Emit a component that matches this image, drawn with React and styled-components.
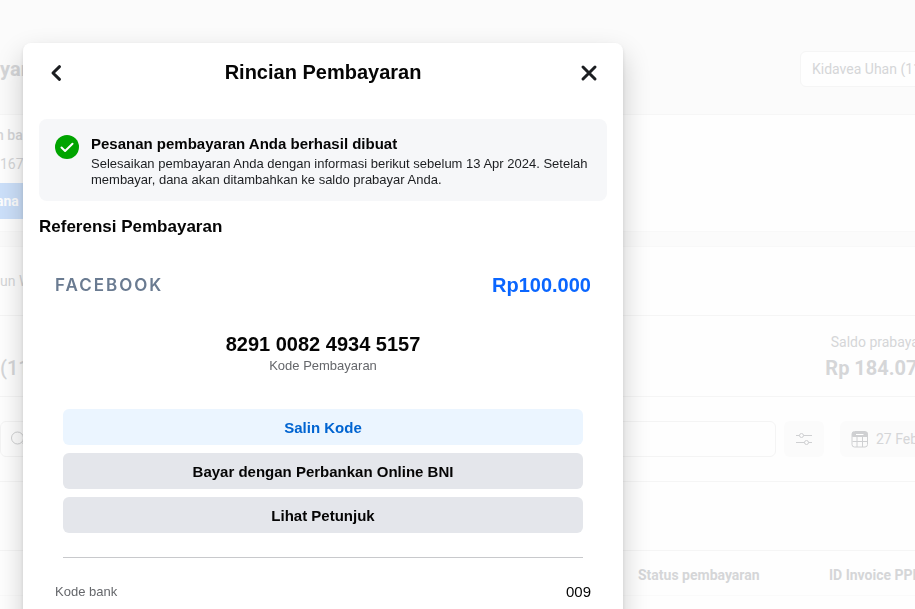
import React from 'react';
import styled, { createGlobalStyle } from 'styled-components';

const GlobalStyle = createGlobalStyle`
  * {
    box-sizing: border-box;
  }
  body {
    margin: 0;
    overflow: hidden;
    background: #fefefe;
    font-family: Roboto, sans-serif;
  }
  h1, h2, h3, p, dl, dd {
    margin: 0;
  }
  button, input, select {
    font-family: inherit;
  }
`;

/* Billing page behind the dialog, faded out */

const Page = styled.main`
  width: calc(100% + 24px);
  color: #d5d6d8;
  font-size: 14px;
  line-height: 20px;
  white-space: nowrap;
`;

const TopBar = styled.header`
  display: flex;
  align-items: center;
  justify-content: space-between;
  height: 115px;
  padding-top: 24px;
  background: #fbfbfb;
  border-bottom: 1px solid #f6f6f6;
`;

const PageTitle = styled.h1`
  font-size: 20px;
  font-weight: 700;
`;

const AccountSelect = styled.select`
  appearance: none;
  width: 139px;
  height: 36px;
  padding: 0 11px;
  border: 1px solid #f5f5f5;
  border-radius: 6px;
  background: #fefefe;
  color: #d5d6d8;
  font-size: 14px;
`;

const FundsSection = styled.section`
  display: flex;
  flex-direction: column;
  align-items: flex-start;
  justify-content: flex-end;
  gap: 9px;
  height: 116px;
  padding-bottom: 12px;
`;

const Strong = styled.p`
  margin-left: -4px;
  font-weight: 500;
`;

const AddFunds = styled.button`
  height: 36px;
  margin-left: -4px;
  padding: 0 16px 0 0;
  border: 0;
  border-radius: 0 6px 6px 0;
  background: #cce0fa;
  color: #fefefe;
  font-size: 14px;
  font-weight: 700;
`;

const Divider = styled.div`
  height: 16px;
  background: #fbfbfb;
  border-top: 1px solid #f8f8f8;
  border-bottom: 1px solid #f8f8f8;
`;

const Row = styled.section`
  display: flex;
  align-items: center;
  justify-content: space-between;
  height: ${(props) => props.$height};
  border-bottom: 1px solid #f5f5f5;
`;

const Balance = styled.div`
  display: flex;
  flex-direction: column;
  align-items: center;
  gap: 4px;
  padding-right: 10px;
`;

const Amount = styled.p`
  font-size: 20px;
  line-height: 24px;
  font-weight: 700;
`;

const RowTitle = styled.h2`
  padding-top: 24px;
  font-size: 20px;
  line-height: 24px;
  font-weight: 500;
`;

const Filters = styled.form`
  display: flex;
  align-items: center;
  height: 85px;
  border-bottom: 1px solid #f5f5f5;
`;

const SearchBox = styled.label`
  display: flex;
  flex: 1;
  align-items: center;
  gap: 8px;
  height: 36px;
  padding: 0 10px;
  border: 1px solid #f4f4f4;
  border-radius: 6px;
`;

const SearchInput = styled.input`
  flex: 1;
  border: 0;
  outline: 0;
  background: transparent;
  font-size: 14px;
`;

const FilterButton = styled.button`
  display: flex;
  align-items: center;
  justify-content: ${(props) => (props.$wide ? 'flex-start' : 'center')};
  gap: 8px;
  width: ${(props) => (props.$wide ? '99px' : '40px')};
  height: 36px;
  margin-left: ${(props) => (props.$wide ? '16px' : '8px')};
  padding: ${(props) => (props.$wide ? '0 11px' : '0')};
  border: 0;
  border-radius: 6px;
  background: #fbfbfb;
  color: #d5d6d8;
  font-size: 14px;
  white-space: nowrap;
`;

const Table = styled.table`
  width: 100%;
  border-collapse: collapse;
  table-layout: fixed;
`;

const Th = styled.th`
  width: ${(props) => props.$width || 'auto'};
  height: 44px;
  padding: 4px 8px 0;
  border-bottom: 1px solid #fafafa;
  font-weight: 700;
  text-align: left;
`;

/* Dialog */

const Overlay = styled.div`
  position: fixed;
  inset: 0;
  overflow: hidden;
  padding: 43px 23px 0;
  font-family: "Liberation Sans", Arial, sans-serif;
  color: #050505;
`;

const Dialog = styled.div`
  max-width: 600px;
  min-height: calc(100% + 48px);
  padding: 12px 16px 0;
  border-radius: 8px;
  background: #fff;
  box-shadow: 0 12px 28px rgba(0, 0, 0, 0.2), 0 2px 4px rgba(0, 0, 0, 0.1);
`;

const DialogHeader = styled.header`
  display: flex;
  align-items: center;
  justify-content: space-between;
  height: 36px;
`;

const DialogTitle = styled.h2`
  padding-bottom: 2px;
  font-size: 20px;
  line-height: 24px;
  font-weight: 700;
`;

const IconButton = styled.button`
  display: flex;
  align-items: center;
  justify-content: center;
  width: 36px;
  height: 36px;
  padding: 0;
  border: 0;
  background: transparent;
  color: #1c1e21;
`;

const Notice = styled.section`
  display: flex;
  gap: 12px;
  margin-top: 28px;
  padding: 16px 16px 13px;
  border-radius: 8px;
  background: #f6f7f9;
`;

const NoticeTitle = styled.h3`
  margin-bottom: 3px;
  font-size: 15px;
  line-height: 18px;
  font-weight: 700;
`;

const NoticeText = styled.p`
  color: #1c1e21;
  font-size: 13px;
  line-height: 16px;
`;

const SectionTitle = styled.h3`
  margin-top: 16px;
  font-size: 17px;
  line-height: 20px;
  font-weight: 700;
`;

const Payee = styled.div`
  display: flex;
  align-items: center;
  justify-content: space-between;
  margin-top: 36px;
  padding: 0 16px;
`;

const Wordmark = styled.span`
  color: #6a7b91;
  font-family: Inter, sans-serif;
  font-size: 17px;
  line-height: 24px;
  font-weight: 600;
  letter-spacing: 2px;
`;

const Price = styled.strong`
  color: #0a66ff;
  font-size: 20px;
  line-height: 24px;
`;

const Code = styled.div`
  margin-top: 35px;
  text-align: center;
`;

const CodeNumber = styled.p`
  font-size: 20px;
  line-height: 24px;
  font-weight: 700;
`;

const Caption = styled.p`
  color: #65676b;
  font-size: 13px;
  line-height: 20px;
`;

const Actions = styled.div`
  display: flex;
  flex-direction: column;
  gap: 8px;
  margin: 33px 24px 0;
  padding-bottom: 24px;
  border-bottom: 1px solid #c8c9cc;
`;

const Action = styled.button`
  height: 36px;
  border: 0;
  border-radius: 6px;
  background: ${(props) => (props.$primary ? '#ebf5ff' : '#e4e6eb')};
  color: ${(props) => (props.$primary ? '#0064d1' : '#050505')};
  font-size: 15px;
  font-weight: 700;
`;

const Details = styled.dl`
  display: flex;
  align-items: center;
  justify-content: space-between;
  margin-top: 24px;
  padding: 0 16px;
  line-height: 20px;
`;

const Term = styled.dt`
  color: #65676b;
  font-size: 13px;
`;

const Value = styled.dd`
  font-size: 15px;
`;

const CheckSvg = styled.svg`
  flex: none;
`;

const BackIcon = () => (
  <svg width="20" height="20" viewBox="0 0 20 20" fill="none" stroke="currentColor" strokeWidth="3" strokeLinecap="round" strokeLinejoin="round">
    <path d="M12.5 3.7 6 10l6.500 6.300" />
  </svg>
);

const CloseIcon = () => (
  <svg width="20" height="20" viewBox="0 0 20 20" fill="none" stroke="currentColor" strokeWidth="3" strokeLinecap="round">
    <path d="m4 4 12 12M16 4 4 16" />
  </svg>
);

const CheckIcon = () => (
  <CheckSvg width="24" height="24" viewBox="0 0 24 24">
    <circle cx="12" cy="12" r="12" fill="#00a400" />
    <path d="m6.500 12.500 3.600 3.500 7.400-7.200" fill="none" stroke="#fff" strokeWidth="2" strokeLinecap="round" strokeLinejoin="round" />
  </CheckSvg>
);

const SearchIcon = () => (
  <svg width="16" height="16" viewBox="0 0 16 16" fill="none" stroke="#d0d1d2">
    <circle cx="6.500" cy="7" r="6" />
    <path d="m11 11.500 3.500 3.500" />
  </svg>
);

const SlidersIcon = () => (
  <svg width="16" height="16" viewBox="0 0 16 16" fill="none" stroke="#cfd0d2">
    <path d="M0 4.500h3.500M7.500 4.500H16M0 11.500h8.500M12.500 11.500H16" />
    <circle cx="5.500" cy="4.500" r="2" />
    <circle cx="10.500" cy="11.500" r="2" />
  </svg>
);

const CalendarIcon = () => (
  <svg width="17" height="17" viewBox="0 0 17 17" fill="none" stroke="#cfd0d2">
    <rect x="1" y="0.500" width="15.500" height="15.500" rx="2.500" />
    <path d="M1.500 1.500h14.500v4H1.500z" fill="#cfd0d2" />
    <path d="M6 6v10M11.500 6v10M1.500 10.500h14.500" />
    <path d="M5 3.500h7.500" stroke="#fff" />
  </svg>
);

const Billing = () => (
  <Page>
    <TopBar>
      <PageTitle>yaran</PageTitle>
      <AccountSelect aria-label="Kidavea Uhan">
        <option>Kidavea Uhan (11</option>
      </AccountSelect>
    </TopBar>
    <FundsSection>
      <Strong>n ba</Strong>
      <p>167</p>
      <AddFunds type="button">ana</AddFunds>
    </FundsSection>
    <Divider />
    <Row $height="69px">
      <p>un W</p>
    </Row>
    <Row $height="81px">
      <RowTitle>(11</RowTitle>
      <Balance>
        <p>Saldo prabayar</p>
        <Amount>Rp 184.073</Amount>
      </Balance>
    </Row>
    <Filters>
      <SearchBox>
        <SearchIcon />
        <SearchInput type="text" />
      </SearchBox>
      <FilterButton type="button" aria-label="Filter">
        <SlidersIcon />
      </FilterButton>
      <FilterButton type="button" $wide>
        <CalendarIcon />
        27 Feb
      </FilterButton>
    </Filters>
    <Row $height="69px" />
    <Table>
      <thead>
        <tr>
          <Th />
          <Th $width="191px">Status pembayaran</Th>
          <Th $width="118px">ID Invoice PPN</Th>
        </tr>
      </thead>
    </Table>
  </Page>
);

const PaymentDialog = () => (
  <Overlay>
    <Dialog role="dialog" aria-labelledby="dialog-title">
      <DialogHeader>
        <IconButton type="button" aria-label="Kembali">
          <BackIcon />
        </IconButton>
        <DialogTitle id="dialog-title">Rincian Pembayaran</DialogTitle>
        <IconButton type="button" aria-label="Tutup">
          <CloseIcon />
        </IconButton>
      </DialogHeader>
      <Notice>
        <CheckIcon />
        <div>
          <NoticeTitle>Pesanan pembayaran Anda berhasil dibuat</NoticeTitle>
          <NoticeText>
            Selesaikan pembayaran Anda dengan informasi berikut sebelum 13 Apr 2024. Setelah membayar, dana akan ditambahkan ke saldo prabayar Anda.
          </NoticeText>
        </div>
      </Notice>
      <SectionTitle>Referensi Pembayaran</SectionTitle>
      <Payee>
        <Wordmark>FACEBOOK</Wordmark>
        <Price>Rp100.000</Price>
      </Payee>
      <Code>
        <CodeNumber>8291 0082 4934 5157</CodeNumber>
        <Caption>Kode Pembayaran</Caption>
      </Code>
      <Actions>
        <Action type="button" $primary>Salin Kode</Action>
        <Action type="button">Bayar dengan Perbankan Online BNI</Action>
        <Action type="button">Lihat Petunjuk</Action>
      </Actions>
      <Details>
        <Term>Kode bank</Term>
        <Value>009</Value>
      </Details>
    </Dialog>
  </Overlay>
);

const App = () => {
  return (
    <>
      <GlobalStyle />
      <Billing />
      <PaymentDialog />
    </>
  );
};

export default App;
